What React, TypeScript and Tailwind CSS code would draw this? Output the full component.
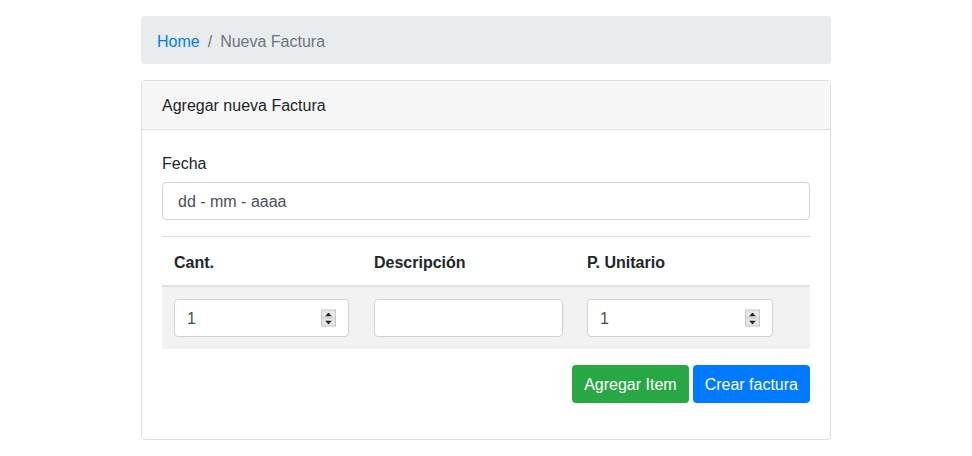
import React from "react";

const Spinner: React.FC = () => (
  <div className="pointer-events-none absolute right-[13px] top-1/2 flex h-[17px] w-[15px] -translate-y-1/2 flex-col border border-[#c8c8c8] bg-[#e6e6e6]">
    <div className="flex flex-1 items-center justify-center border-b border-[#c8c8c8]">
      <svg width="7" height="4" viewBox="0 0 7 4">
        <path d="M0 4 L3.5 0 L7 4 Z" fill="#222" />
      </svg>
    </div>
    <div className="flex flex-1 items-center justify-center">
      <svg width="7" height="4" viewBox="0 0 7 4">
        <path d="M0 0 L3.5 4 L7 0 Z" fill="#222" />
      </svg>
    </div>
  </div>
);

const NumberField: React.FC<{ value: string; className: string }> = ({ value, className }) => (
  <div className={`relative ${className}`}>
    <input
      type="text"
      readOnly
      value={value}
      className="h-[38px] w-full rounded border border-[#ced4da] bg-white px-3 pt-[2px] text-base text-[#495057] outline-none"
    />
    <Spinner />
  </div>
);

export default function App() {
  return (
    <div
      className="min-h-screen bg-white text-base leading-6 text-[#212529]"
      style={{ fontFamily: '"Liberation Sans", Arial, sans-serif' }}
    >
      <div className="mx-auto w-[720px] px-[15px] pt-4">
        {/* breadcrumb */}
        <nav className="mb-4 flex h-12 items-center rounded bg-[#e9ecef] px-4 pt-[3px]">
          <a className="text-[#007bff]">Home</a>
          <span className="px-2 text-[#6c757d]">/</span>
          <span className="text-[#6c757d]">Nueva Factura</span>
        </nav>

        {/* card */}
        <div className="rounded border border-[#dfdfdf] bg-white">
          <div className="flex h-[49px] items-center border-b border-[#dfdfdf] bg-[#f7f7f7] px-5 pt-[2px]">
            Agregar nueva Factura
          </div>
          <div className="p-5">
            <label className="mb-[6px] block pt-[2px]">Fecha</label>
            <input
              type="text"
              readOnly
              value="dd - mm - aaaa"
              className="block h-[38px] w-full rounded border border-[#ced4da] bg-white px-[15px] pt-[2px] text-base text-[#495057] outline-none"
            />

            <div className="mt-4 border-t border-[#dee2e6]">
              <div className="grid grid-cols-[200px_213px_210px_1fr] border-b-2 border-[#dee2e6] font-bold">
                <div className="px-3 pb-[10px] pt-[14px]">Cant.</div>
                <div className="px-3 pb-[10px] pt-[14px]">Descripción</div>
                <div className="px-3 pb-[10px] pt-[14px]">P. Unitario</div>
                <div className="p-3"></div>
              </div>
              <div className="grid grid-cols-[200px_213px_210px_1fr] bg-[#f2f2f2]">
                <div className="p-3">
                  <NumberField value="1" className="w-[175px]" />
                </div>
                <div className="p-3">
                  <input
                    type="text"
                    readOnly
                    className="h-[38px] w-full rounded border border-[#ced4da] bg-white px-3 outline-none"
                  />
                </div>
                <div className="p-3">
                  <NumberField value="1" className="w-[186px]" />
                </div>
                <div className="p-3"></div>
              </div>
            </div>

            <div className="mb-4 mt-4 flex justify-end gap-1">
              <button className="h-[38px] rounded bg-[#28a745] px-3 pt-[2px] text-white">Agregar Item</button>
              <button className="h-[38px] rounded bg-[#007bff] px-3 pt-[2px] text-white">Crear factura</button>
            </div>
          </div>
        </div>
      </div>
    </div>
  );
}
